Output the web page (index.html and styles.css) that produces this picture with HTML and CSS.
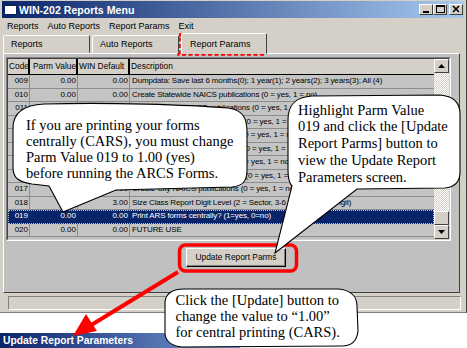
FILE: index.html
```html
<!DOCTYPE html>
<html>
<head>
<meta charset="utf-8">
<link rel="stylesheet" href="styles.css">
</head>
<body>
<div class="screen">
  <div class="window">
    <div class="titlebar">
      <span class="app-icon"></span>
      <span class="title">WIN-202 Reports Menu</span>
      <div class="caption-btns">
        <span class="cbtn"><svg width="12" height="9" viewBox="0 0 12 9"><rect x="3" y="6" width="6" height="2" fill="#000"/></svg></span>
        <span class="cbtn"><svg width="12" height="9" viewBox="0 0 12 9"><rect x="2.5" y="0.5" width="8" height="7" fill="none" stroke="#000"/><rect x="2" y="0" width="9" height="2" fill="#000"/></svg></span>
        <span class="cbtn close"><svg width="12" height="9" viewBox="0 0 12 9"><path d="M3 1 L9 7 M9 1 L3 7" stroke="#000" stroke-width="1.6"/></svg></span>
      </div>
    </div>
    <div class="menubar">
      <span>Reports</span><span>Auto Reports</span><span>Report Params</span><span>Exit</span>
    </div>
    <div class="tabs">
      <div class="tab">Reports</div>
      <div class="tab">Auto Reports</div>
      <div class="tab active">Report Params</div>
    </div>
    <div class="panel">
      <div class="gridwrap">
        <div class="gridinner">
          <div class="grid">
            <div class="row head"><div class="c code">Code</div><div class="c parm">Parm Value</div><div class="c win">WIN Default</div><div class="c desc">Description</div></div>
            <div class="row"><div class="c code">009</div><div class="c parm">0.00</div><div class="c win">0.00</div><div class="c desc">Dumpdata: Save last 6 months(0); 1 year(1); 2 years(2); 3 years(3); All (4)</div></div>
            <div class="row"><div class="c code">010</div><div class="c parm">0.00</div><div class="c win">0.00</div><div class="c desc">Create Statewide NAICS publications (0 = yes, 1 = no)</div></div>
            <div class="row"><div class="c code">011</div><div class="c parm">0.00</div><div class="c win">0.00</div><div class="c desc">Create County NAICS publications (0 = yes, 1 = no)</div></div>
            <div class="row"><div class="c code">012</div><div class="c parm">0.00</div><div class="c win">0.00</div><div class="c desc">Create MSA NAICS publications (0 = yes, 1 = no)</div></div>
            <div class="row"><div class="c code">013</div><div class="c parm">0.00</div><div class="c win">0.00</div><div class="c desc">Create WIA NAICS publications (0 = yes, 1 = no)</div></div>
            <div class="row"><div class="c code">014</div><div class="c parm">0.00</div><div class="c win">0.00</div><div class="c desc">Create LMA NAICS publications (0 = yes, 1 = no)</div></div>
            <div class="row"><div class="c code">015</div><div class="c parm">0.00</div><div class="c win">0.00</div><div class="c desc">Create Statewide publications (0 = yes, 1 = no)</div></div>
            <div class="row"><div class="c code">016</div><div class="c parm">0.00</div><div class="c win">0.00</div><div class="c desc">Create Town NAICS publications (0 = yes, 1 = no)</div></div>
            <div class="row"><div class="c code">017</div><div class="c parm">0.00</div><div class="c win">0.00</div><div class="c desc">Create City NAICS publications (0 = yes, 1 = no)</div></div>
            <div class="row"><div class="c code">018</div><div class="c parm">3.00</div><div class="c win">3.00</div><div class="c desc">Size Class Report Digit Level (2 = Sector, 3-6 = 3 Digit or 6 Digit)</div></div>
            <div class="row sel"><div class="c code">019</div><div class="c parm">0.00</div><div class="c win">0.00</div><div class="c desc">Print ARS forms centrally? (1=yes, 0=no)</div></div>
            <div class="row"><div class="c code">020</div><div class="c parm">0.00</div><div class="c win">0.00</div><div class="c desc">FUTURE USE</div></div>
          </div>
          <div class="vscroll">
            <div class="sbtn"><svg width="7" height="4" viewBox="0 0 7 4"><path d="M3.5 0 L7 4 L0 4 Z" fill="#000"/></svg></div>
            <div class="track"></div>
            <div class="thumb"></div>
            <div class="sbtn"><svg width="7" height="4" viewBox="0 0 7 4"><path d="M0 0 L7 0 L3.5 4 Z" fill="#000"/></svg></div>
          </div>
        </div>
      </div>
      <div class="btnrow"><div class="btn">Update Report Parms</div></div>
    </div>
    <div class="statusbar"><div class="status-field"></div></div>
  </div>
  <div class="next-title">Update Report Parameters</div>

  <svg class="annot" width="467" height="348" viewBox="0 0 467 348">
    <rect x="179" y="35" width="85" height="19" fill="none" stroke="#ff0000" stroke-width="3.5" stroke-dasharray="4 2.5"/>
    <rect x="179.5" y="245" width="117" height="26" rx="6" fill="none" stroke="#ff0000" stroke-width="3.5"/>
    <path d="M178 272 L88 327" stroke="#ff0000" stroke-width="4" fill="none"/>
    <path d="M73 336 L97 331 L86 314 Z" fill="#ff0000"/>

    <path class="bubble" d="M13 128 C13 112 24 105 44 104 C110 102 190 105 228 108 C243 110 247 118 247 132 L247 170 C247 181 243 186 232 187 L116 190 L63 212 L49 186 L32 184 C19 182 13 178 13 168 Z"/>
    <path class="bubble" d="M288 120 C288 104 296 97 312 96 L440 95 C452 96 460 102 460 114 L460 172 C460 182 455 187 445 188 L357 189 L275 253 L292 186 C289 183 288 178 288 170 Z"/>
    <path class="bubble" d="M165 302 C166 293 172 289 184 289 L338 289 C350 290 357 296 357 306 L358 331 C357 341 352 346 342 346 L182 347 C172 346 166 342 165 334 Z"/>

    <g class="btext">
      <text x="26" y="130">If you are printing your forms</text>
      <text x="26" y="146">centrally (CARS), you must change</text>
      <text x="26" y="162">Parm Value 019 to 1.00 (yes)</text>
      <text x="26" y="178">before running the ARCS Forms.</text>

      <text x="298" y="114.5">Highlight Parm Value</text>
      <text x="298" y="131.3">019 and click the [Update</text>
      <text x="298" y="148">Report Parms] button to</text>
      <text x="298" y="164.8">view the Update Report</text>
      <text x="298" y="181.6">Parameters screen.</text>

      <text x="175.5" y="305">Click the [Update] button to</text>
      <text x="175.5" y="321">change the value to “1.00”</text>
      <text x="175.5" y="337">for central printing (CARS).</text>
    </g>
  </svg>
</div>
</body>
</html>
```
FILE: styles.css
```css
body {
  margin: 0;
  background: #fff;
  font-family: "Liberation Sans", Arial, sans-serif;
}
.screen {
  position: relative;
  width: 467px;
  height: 348px;
  overflow: hidden;
  background: #fff;
}
.window {
  width: 467px;
  height: 313px;
  box-sizing: border-box;
  background: #d4d0c8;
  padding: 1px 2px 0 2px;
  display: flex;
  flex-direction: column;
  border-right: 1px solid #404040;
  border-bottom: 1px solid #808080;
}
.titlebar {
  height: 17px;
  flex: none;
  display: flex;
  align-items: center;
  background: linear-gradient(to right, #0a246a, #a6caf0);
  padding: 0 1px 0 2px;
}
.app-icon {
  width: 11px;
  height: 8px;
  background: #fff;
  border: 1px solid #10205a;
  border-top-width: 2px;
  margin-right: 2px;
}
.title {
  flex: 1;
  color: #fff;
  font-weight: bold;
  font-size: 10.6px;
}
.caption-btns {
  display: flex;
  align-items: center;
}
.cbtn {
  width: 14px;
  height: 11px;
  box-sizing: border-box;
  background: #d4d0c8;
  border: 1px solid;
  border-color: #fff #404040 #404040 #fff;
  display: flex;
  align-items: center;
  justify-content: center;
}
.cbtn.close {
  margin-left: 2px;
}
.menubar {
  height: 15px;
  flex: none;
  display: flex;
  align-items: center;
  gap: 9px;
  padding-left: 5px;
  font-size: 9px;
  color: #000;
}
.tabs {
  height: 20px;
  flex: none;
  display: flex;
  align-items: flex-end;
  gap: 2px;
  padding-left: 1px;
  position: relative;
  z-index: 1;
}
.tab {
  width: 87px;
  height: 18px;
  box-sizing: border-box;
  padding-left: 7px;
  font-size: 9px;
  line-height: 17px;
  border: 1px solid;
  border-color: #fff #404040 transparent #fff;
  border-radius: 2px 2px 0 0;
  background: #d4d0c8;
}
.tab.active {
  width: 86px;
  height: 21px;
  margin-bottom: -1px;
  padding-left: 8px;
  line-height: 20px;
}
.panel {
  height: 240px;
  width: 457px;
  flex: none;
  box-sizing: border-box;
  margin-left: 1px;
  background: #c0c0c0;
  border: 1px solid;
  border-color: #fff #404040 #404040 #fff;
  padding: 3px 0 0 2px;
}
.gridwrap {
  width: 445px;
  height: 184px;
  box-sizing: border-box;
  border: 1px solid;
  border-color: #808080 #fff #fff #808080;
}
.gridinner {
  height: 100%;
  box-sizing: border-box;
  border: 1px solid;
  border-color: #404040 #d4d0c8 #d4d0c8 #404040;
  display: flex;
  background: #c0c0c0;
}
.grid {
  flex: 1;
  overflow: hidden;
  font-size: 8px;
  color: #000;
}
.row {
  display: grid;
  grid-template-columns: 22px 48px 52px 1fr;
  height: 13.5px;
  background: #c4c4c4;
}
.row .c {
  white-space: nowrap;
  overflow: hidden;
  line-height: 12.5px;
  border-right: 1px solid #8c8c8c;
  border-bottom: 1px solid #8c8c8c;
}
.row .desc {
  letter-spacing: -0.15px;
}
.row .code, .row .parm, .row .win {
  text-align: right;
  padding-right: 1px;
}
.row .desc {
  padding-left: 2px;
  border-right: none;
}
.row.head {
  height: 16px;
  background: #d4d0c8;
  font-size: 8.4px;
}
.row.head .c {
  text-align: left;
  letter-spacing: 0;
  line-height: 15px;
  border-right: 2px solid #000;
  border-bottom: 1px solid #000;
  padding-left: 1px;
}
.row.head .parm { padding-left: 3px; }
.row.head .desc { border-right: none; }
.row.sel {
  background: #0a246a;
  color: #fff;
  outline: 1px dotted #c0c0c0;
  outline-offset: -1px;
}
.row.sel .c { border-color: #0a246a; }
.vscroll {
  width: 15px;
  display: flex;
  flex-direction: column;
  background: #e8e6e2;
}
.sbtn {
  height: 14px;
  flex: none;
  box-sizing: border-box;
  background: #d4d0c8;
  border: 1px solid;
  border-color: #fff #404040 #404040 #fff;
  display: flex;
  align-items: center;
  justify-content: center;
}
.track {
  flex: 1;
  background: repeating-conic-gradient(#fff 0 25%, #d4d0c8 0 50%) 0 0 / 2px 2px;
}
.thumb {
  height: 14px;
  box-sizing: border-box;
  background: #d4d0c8;
  border: 1px solid;
  border-color: #fff #404040 #404040 #fff;
}
.btnrow {
  padding: 7px 0 0 180px;
}
.btn {
  width: 100px;
  height: 19px;
  box-sizing: border-box;
  background: #d4d0c8;
  border: 1px solid;
  border-color: #fff #000 #000 #fff;
  box-shadow: inset -1px -1px #808080;
  font-size: 8.4px;
  line-height: 17px;
  text-align: center;
  color: #000;
}
.statusbar {
  height: 20px;
  flex: none;
  box-sizing: border-box;
  padding: 3px 3px 0 6px;
}
.status-field {
  height: 14px;
  box-sizing: border-box;
  border: 1px solid;
  border-color: #808080 #fff #fff #808080;
  background: #d4d0c8;
}
.next-title {
  margin-top: 20px;
  width: 240px;
  height: 15px;
  background: linear-gradient(to right, #0a246a, #7a9cd6);
  color: #fff;
  font-weight: bold;
  font-size: 10.3px;
  line-height: 15px;
  padding-left: 3px;
  box-sizing: border-box;
}
.annot {
  position: absolute;
  left: 0;
  top: 0;
}
.bubble {
  fill: #fff;
  stroke: #000;
  stroke-width: 1.1;
}
.btext text {
  font-family: "Liberation Serif", "Times New Roman", serif;
  font-size: 14.5px;
  fill: #000;
}
```
